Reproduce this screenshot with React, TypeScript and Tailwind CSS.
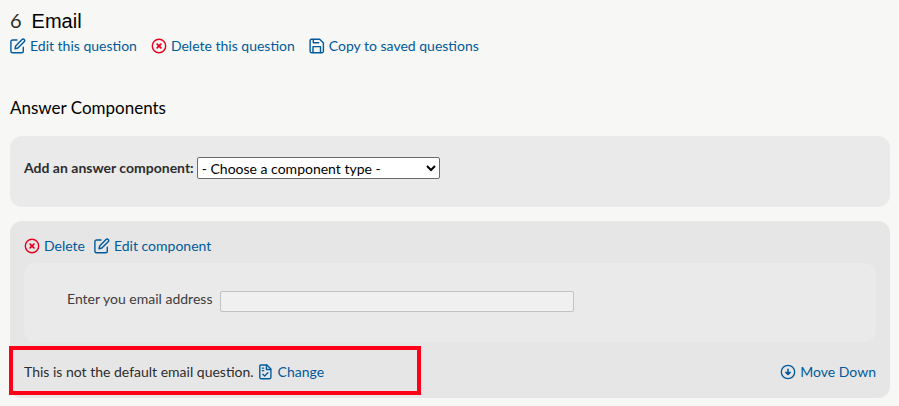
import React from 'react';

interface IconProps {
  className?: string;
}

const EditIcon: React.FC<IconProps> = ({ className = '' }) => (
  <svg viewBox="0 0 16 16" fill="none" stroke="currentColor" strokeWidth="1.4" strokeLinecap="round" strokeLinejoin="round" aria-hidden="true" className={`size-4 shrink-0 ${className}`}>
    <path d="M7 2H2.600C1.500 2 .900 2.600.900 3.600v9.700c0 1 .600 1.500 1.600 1.500h9.200c1 0 1.600-.500 1.600-1.500V9.300" />
    <path d="M5.700 7.900 12 1.600c.700-.700 1.600-.700 2.200-.100.700.700.700 1.500 0 2.200L7.900 10l-2.900.700z" />
  </svg>
);

const DeleteIcon: React.FC<IconProps> = ({ className = '' }) => (
  <svg viewBox="0 0 16 16" fill="none" stroke="currentColor" strokeWidth="1.4" strokeLinecap="round" aria-hidden="true" className={`size-4 shrink-0 text-[#e6001f] ${className}`}>
    <circle cx="8" cy="8" r="6.7" />
    <path d="m6.100 6.100 3.800 3.800M9.900 6.100 6.100 9.900" strokeWidth="1.700" />
  </svg>
);

const SaveIcon: React.FC<IconProps> = ({ className = '' }) => (
  <svg viewBox="0 0 16 16" fill="none" stroke="currentColor" strokeWidth="1.4" strokeLinecap="round" strokeLinejoin="round" aria-hidden="true" className={`size-4 shrink-0 ${className}`}>
    <path d="M2.500 1.300h8.200L14.400 5v8.300c0 .900-.500 1.400-1.400 1.400H2.500c-.900 0-1.400-.500-1.400-1.400V2.700c0-.900.500-1.400 1.400-1.400z" />
    <path d="M4.300 1.500v3.300h5.400M4 14.500V8.600h7.500v5.900" />
  </svg>
);

const ChangeIcon: React.FC<IconProps> = ({ className = '' }) => (
  <svg viewBox="0 0 16 16" fill="none" stroke="currentColor" strokeWidth="1.4" strokeLinecap="round" strokeLinejoin="round" aria-hidden="true" className={`size-4 shrink-0 ${className}`}>
    <path d="M2.800 1h6.100l4 4v8.300c0 .900-.500 1.400-1.400 1.400H3.200c-.900 0-1.400-.500-1.400-1.400V2c0-.600.400-1 1-1z" />
    <path d="M8.400 1.300v4.200h4.200M4.300 4.200h1.400M4.300 6.700h1.400M4.900 10.300l1.700 1.700 3.300-3.300" strokeWidth="1.300" />
  </svg>
);

const MoveDownIcon: React.FC<IconProps> = ({ className = '' }) => (
  <svg viewBox="0 0 16 16" fill="none" stroke="currentColor" strokeWidth="1.3" strokeLinecap="round" strokeLinejoin="round" aria-hidden="true" className={`size-4 shrink-0 ${className}`}>
    <circle cx="8" cy="8" r="6.700" />
    <path d="M8 5.300v5M5.900 8.400 8 10.500l2.100-2.100" strokeWidth="1.600" />
  </svg>
);

interface ActionLinkProps {
  icon: React.ReactNode;
  children: React.ReactNode;
}

const ActionLink: React.FC<ActionLinkProps> = ({ icon, children }) => (
  <a href="#" className="flex items-center gap-1 text-[#005a9c] hover:underline">
    {icon}
    <span>{children}</span>
  </a>
);

const App: React.FC = () => {
  return (
    <main className="min-h-screen bg-[#f7f7f5] pt-2 pr-[9px] pb-2 pl-2.5 font-[Lato,sans-serif] text-sm leading-5 text-[#2d2d2d]">
      <header>
        <h1 className="flex items-baseline gap-2.5 text-xl leading-6">
          <span>6</span>
          <span className="font-['Liberation_Sans',sans-serif] text-black">Email</span>
        </h1>
        <nav className="mt-[3px] flex gap-3.5">
          <ActionLink icon={<EditIcon />}>Edit this question</ActionLink>
          <ActionLink icon={<DeleteIcon />}>Delete this question</ActionLink>
          <ActionLink icon={<SaveIcon />}>Copy to saved questions</ActionLink>
        </nav>
      </header>

      <h2 className="mt-10 text-[17px] leading-6 text-black">Answer Components</h2>

      <section className="mt-4 rounded-xl bg-[#eaeaea] px-3.5 pt-[21px] pb-7">
        <div className="flex items-center gap-[3px]">
          <label htmlFor="component-type" className="font-bold">Add an answer component:</label>
          <select id="component-type" className="h-[22px] w-[243px] rounded-xs border border-[#6b6b6b] bg-white text-black">
            <option>- Choose a component type -</option>
          </select>
        </div>
      </section>

      <section className="relative mt-3.5 rounded-xl bg-[#e6e6e6] px-3.5 pt-[15px] pb-4">
        <div className="flex gap-[9px]">
          <ActionLink icon={<DeleteIcon />}>Delete</ActionLink>
          <ActionLink icon={<EditIcon />}>Edit component</ActionLink>
        </div>

        <div className="mt-[7px] flex gap-2 rounded-xl bg-[#eaeaea] px-[43px] pt-7 pb-[30px]">
          <label htmlFor="email" className="leading-4 text-[#3d3d3d]">Enter you email address</label>
          <input id="email" type="email" className="h-[21px] w-[354px] rounded-xs border border-[#c3c3c3] bg-[#f0f0f0] px-1" />
        </div>

        <div className="mt-5 flex justify-between">
          <div className="flex gap-1">
            <p>This is not the default email question.</p>
            <ActionLink icon={<ChangeIcon />}>Change</ActionLink>
          </div>
          <ActionLink icon={<MoveDownIcon />}>Move Down</ActionLink>
        </div>

        {/* highlight around the default question note */}
        <div className="pointer-events-none absolute bottom-[3px] -left-px h-[49px] w-[412px] border-4 border-[#ff0019]" />
      </section>
    </main>
  );
};

export default App;
